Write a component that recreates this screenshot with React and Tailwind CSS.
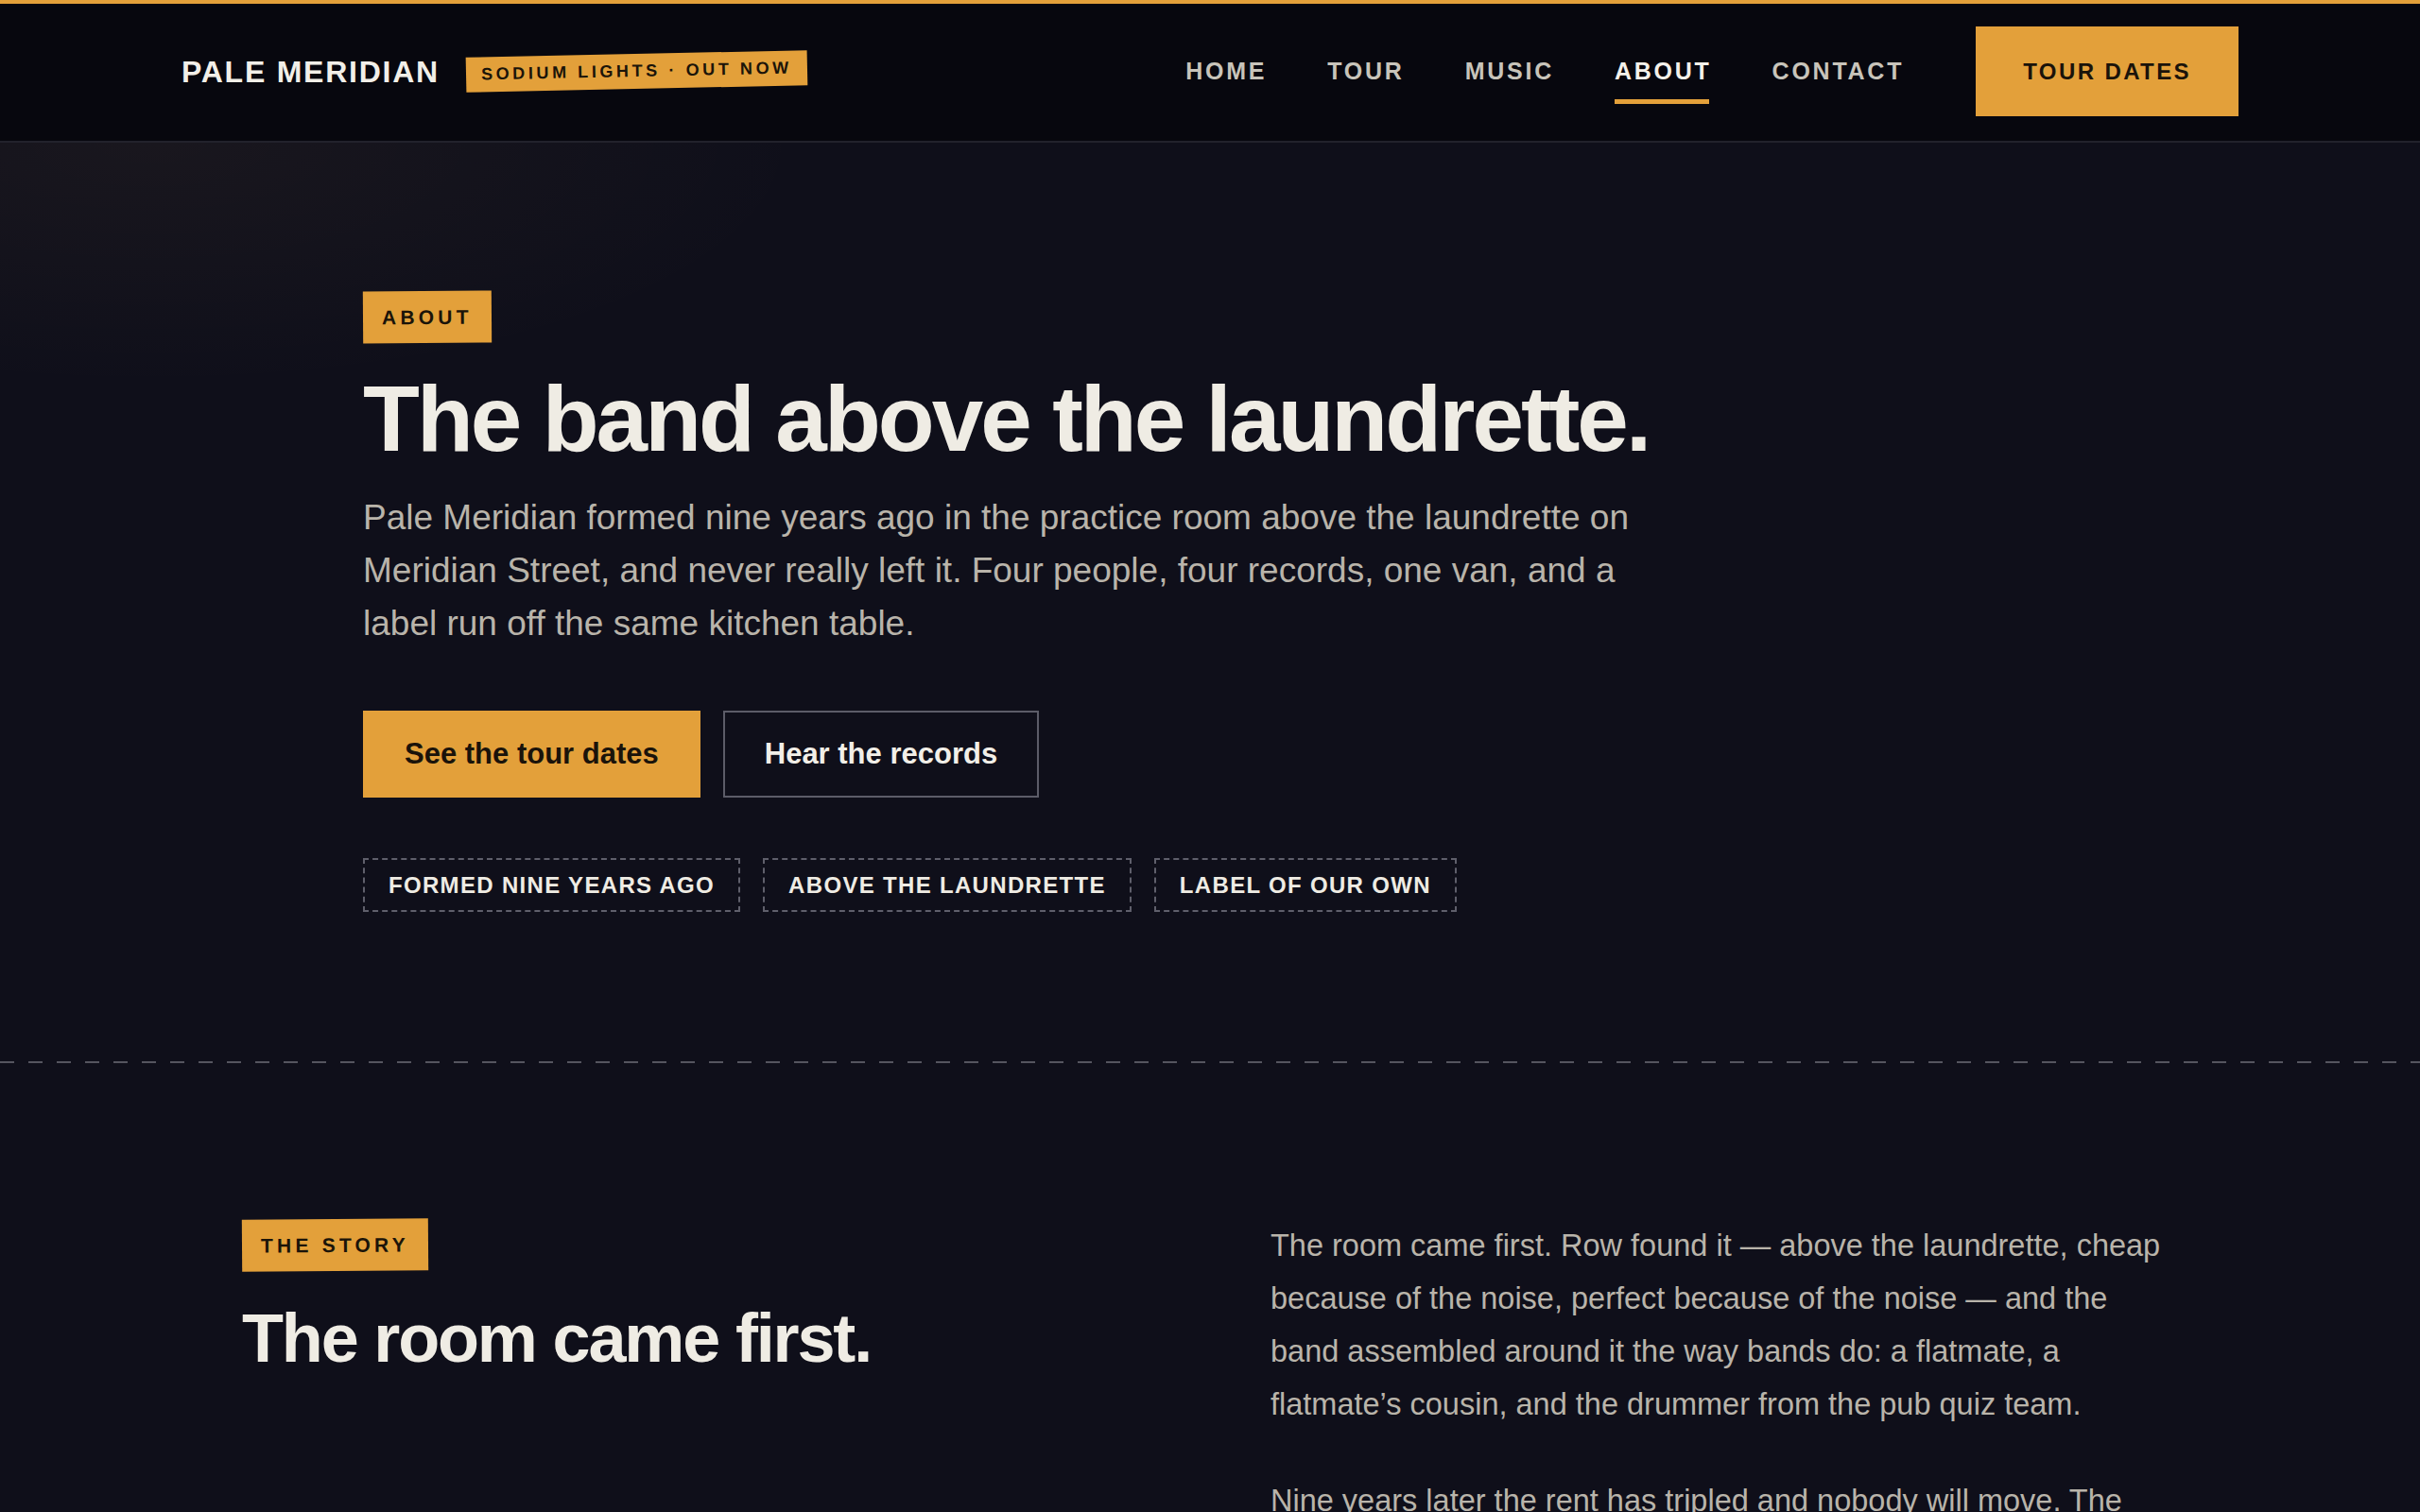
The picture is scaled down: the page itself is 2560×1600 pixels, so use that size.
import React from 'react';

const navLinks = ['Home', 'Tour', 'Music', 'About', 'Contact'];
const facts = ['Formed nine years ago', 'Above the laundrette', 'Label of our own'];

const Label = ({ children }) => (
  <span className="flex h-[55px] w-fit -rotate-[0.4deg] items-center bg-[#e3a03a] px-5 text-[21px] font-bold uppercase tracking-[0.2em] text-[#1b1409]">
    {children}
  </span>
);

const Header = () => (
  <header className="border-t-4 border-b-2 border-t-[#e3a03a] border-b-[#22222c] bg-[#07070e]">
    <div className="mx-auto flex max-w-[2176px] items-center justify-between pt-6 pb-[26px]">
      {/* Brand + release flag */}
      <div className="flex items-center gap-7">
        <span className="text-[32px] font-bold uppercase tracking-[0.055em] text-[#f2efe8]">Pale Meridian</span>
        <span className="flex h-[37px] -rotate-[1.2deg] items-center bg-[#e3a03a] px-4 text-[18px] font-bold uppercase tracking-[0.2em] text-[#1b1409]">
          Sodium Lights · Out Now
        </span>
      </div>

      <div className="flex items-center gap-[76px]">
        <nav className="flex items-center gap-16">
          {navLinks.map((link) => (
            <a
              key={link}
              href="#"
              className={`relative text-[25px] font-bold uppercase tracking-[0.11em] ${
                link === 'About' ? 'text-[#f4f1ea]' : 'text-[#c8c4ba]'
              }`}
            >
              {link}
              {link === 'About' && (
                <span className="absolute top-full left-0 right-[0.11em] mt-[11px] h-[5px] bg-[#e3a03a]" />
              )}
            </a>
          ))}
        </nav>
        <a
          href="#"
          className="flex h-[95px] items-center bg-[#e3a03a] px-[50px] text-[24px] font-bold uppercase tracking-[0.1em] text-[#1a130a]"
        >
          Tour Dates
        </a>
      </div>
    </div>
  </header>
);

const Hero = () => (
  <section className="bg-[#0f0f1a] bg-[radial-gradient(ellipse_700px_260px_at_160px_0px,rgba(255,196,120,0.045),transparent)]">
    <div className="mx-auto max-w-[1792px] pt-[157px] pb-[158px]">
      <Label>About</Label>
      <h1 className="mt-[31px] text-[98px] font-bold leading-none tracking-[-0.03em] text-[#efece4]">
        The band above the laundrette.
      </h1>
      <p className="mt-[28px] whitespace-nowrap text-[37px] leading-[56px] text-[#b9b4aa]">
        Pale Meridian formed nine years ago in the practice room above the laundrette on
        <br />
        Meridian Street, and never really left it. Four people, four records, one van, and a
        <br />
        label run off the same kitchen table.
      </p>

      <div className="mt-16 flex gap-6">
        <a href="#" className="flex h-[92px] items-center bg-[#e3a03a] px-11 text-[31px] font-bold text-[#1a130a]">
          See the tour dates
        </a>
        <a
          href="#"
          className="flex h-[92px] items-center border-2 border-[#5c5c68] px-[42px] text-[31px] font-bold text-[#f2efe8]"
        >
          Hear the records
        </a>
      </div>

      <div className="mt-16 flex gap-6">
        {facts.map((fact) => (
          <span
            key={fact}
            className="flex h-[57px] items-center border-2 border-dashed border-[#5f5f6b] px-[25px] text-[24px] font-bold uppercase tracking-[0.055em] text-[#efece4]"
          >
            {fact}
          </span>
        ))}
      </div>
    </div>
  </section>
);

const Story = () => (
  <section className="bg-[#0f0f1a]">
    <div className="mx-auto grid max-w-[2048px] grid-cols-2 gap-32 pt-[165px] pb-40">
      <div>
        <Label>The story</Label>
        <h2 className="mt-[35px] text-[72px] font-bold leading-none tracking-[-0.03em] text-[#efece4]">
          The room came first.
        </h2>
      </div>
      <div className="text-[32.5px] leading-[56px] text-[#b9b4aa]">
        <p>
          The room came first. Row found it — above the laundrette, cheap because of the noise, perfect because
          of the noise — and the band assembled around it the way bands do: a flatmate, a flatmate’s cousin, and
          the drummer from the pub quiz team.
        </p>
        <p className="mt-[46px]">
          Nine years later the rent has tripled and nobody will move. The washers still shake the floor on
          Thursdays, and every record we have made has that hum somewhere underneath it.
        </p>
      </div>
    </div>
  </section>
);

export default function App() {
  return (
    <div className="min-h-screen bg-[#0f0f1a] font-['Liberation_Sans',Arial,sans-serif]">
      <Header />
      <Hero />
      {/* dashed rule between sections */}
      <div className="h-[2px] bg-[repeating-linear-gradient(90deg,#55555f_0_15px,transparent_15px_30px)]" />
      <Story />
    </div>
  );
}
